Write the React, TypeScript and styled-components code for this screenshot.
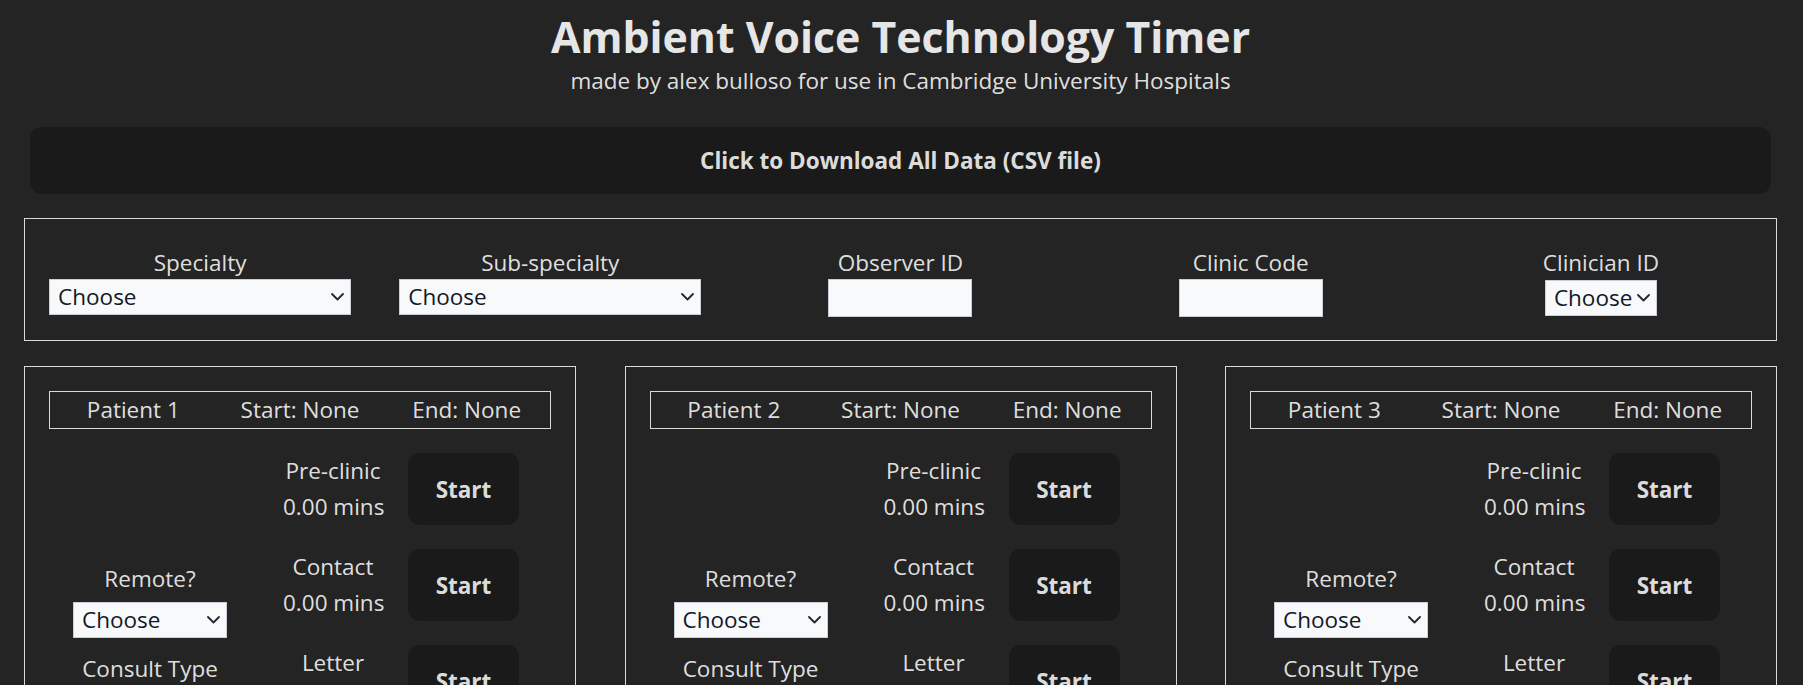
import React from 'react';
import styled, { createGlobalStyle } from 'styled-components';

const GlobalStyle = createGlobalStyle`
  html, body { margin: 0; padding: 0; background: #242424; }
  body {
    font-family: "Open Sans", "Noto Sans", sans-serif;
    color: rgba(255, 255, 255, 0.87);
    font-size: 22.5px;
    line-height: 36px;
    -webkit-font-smoothing: antialiased;
  }
  * { box-sizing: border-box; }
`;

const Page = styled.div`
  padding: 0 26px 0 24px;
`;

const Header = styled.header`
  text-align: center;
`;

const Title = styled.h1`
  margin: 13.6px 0 0;
  font-size: 42.8px;
  line-height: 46px;
  font-weight: 700;
  color: #e6e6e6;
`;

const Subtitle = styled.div`
  margin-top: 3.7px;
  line-height: 36px;
`;

const DownloadButton = styled.button`
  display: block;
  width: calc(100% - 12px);
  height: 67px;
  margin: 28px 6px 0;
  border: none;
  border-radius: 12px;
  background: #1a1a1a;
  color: rgba(255, 255, 255, 0.87);
  font-family: inherit;
  font-size: 22.5px;
  font-weight: 700;
  line-height: 36px;
  cursor: pointer;
`;

const InfoBox = styled.section`
  margin-top: 24px;
  border: 1px solid #d9d9d9;
  padding: 26px 0 23px;
  display: grid;
  grid-template-columns: repeat(5, 1fr);
  align-items: start;
  justify-items: center;
`;

const Field = styled.div`
  display: flex;
  flex-direction: column;
  align-items: center;
`;

const Label = styled.label<{ $gapBelow?: number; $gapAbove?: number }>`
  display: block;
  line-height: 36px;
  white-space: nowrap;
  margin-top: ${(p) => p.$gapAbove ?? 0}px;
  margin-bottom: ${(p) => p.$gapBelow ?? 0}px;
`;

const SelectWrap = styled.div<{ $w: number }>`
  position: relative;
  width: ${(p) => p.$w}px;
  height: 36px;
`;

const Select = styled.select`
  appearance: none;
  -webkit-appearance: none;
  width: 100%;
  height: 100%;
  margin: 0;
  border: 1px solid #c9ced6;
  border-radius: 0;
  background: #f8f9fa;
  color: #111827;
  font-family: inherit;
  font-size: 22.5px;
  line-height: 34px;
  padding: 0 8px;
  outline: none;
`;

const Chevron = styled.svg`
  position: absolute;
  right: 7px;
  top: 14px;
  width: 13px;
  height: 8px;
  pointer-events: none;
`;

const TextInput = styled.input`
  width: 144px;
  height: 38px;
  margin: 0;
  border: 1px solid #c9ced6;
  border-radius: 0;
  background: #f8f9fa;
  font-family: inherit;
  font-size: 22.5px;
  outline: none;
`;

const PatientGrid = styled.div`
  margin-top: 25px;
  display: grid;
  grid-template-columns: repeat(3, 1fr);
  gap: 48.5px;
`;

const PatientCard = styled.section`
  border: 1px solid #d9d9d9;
  padding: 24px 24px 40px;
`;

const PatientHeader = styled.div`
  border: 1px solid #d9d9d9;
  display: grid;
  grid-template-columns: repeat(3, 1fr);
  text-align: center;
  line-height: 36px;
  white-space: nowrap;
`;

const PatientBody = styled.div`
  margin-top: 24px;
  display: grid;
  grid-template-columns: 202px 1fr;
`;

const LeftCol = styled.div`
  display: flex;
  flex-direction: column;
  align-items: center;
  padding-top: 108px;
`;

const TimerList = styled.div`
  display: flex;
  flex-direction: column;
  gap: 24px;
`;

const TimerRow = styled.div`
  display: flex;
  justify-content: center;
  align-items: center;
  gap: 25px;
`;

const TimerText = styled.div`
  width: 100px;
  text-align: center;
  line-height: 36px;
  white-space: nowrap;
`;

const StartButton = styled.button`
  width: 111px;
  height: 72px;
  border: none;
  border-radius: 12px;
  background: #1a1a1a;
  color: rgba(255, 255, 255, 0.87);
  font-family: inherit;
  font-size: 22.5px;
  font-weight: 700;
  cursor: pointer;
  flex-shrink: 0;
`;

const ChooseSelect: React.FC<{ width: number }> = ({ width }) => (
  <SelectWrap $w={width}>
    <Select defaultValue="">
      <option value="">Choose</option>
    </Select>
    <Chevron viewBox="0 0 13 8">
      <path d="M1 1 L6.5 6.5 L12 1" fill="none" stroke="#1f2937" strokeWidth="1.8" strokeLinecap="round" strokeLinejoin="round" />
    </Chevron>
  </SelectWrap>
);

const timers = ['Pre-clinic', 'Contact', 'Letter'];

const Patient: React.FC<{ n: number }> = ({ n }) => (
  <PatientCard>
    <PatientHeader>
      <span>Patient {n}</span>
      <span>Start: None</span>
      <span>End: None</span>
    </PatientHeader>
    <PatientBody>
      <LeftCol>
        <Label $gapBelow={5}>Remote?</Label>
        <ChooseSelect width={154} />
        <Label $gapAbove={13} $gapBelow={5}>Consult Type</Label>
        <ChooseSelect width={154} />
      </LeftCol>
      <TimerList>
        {timers.map((t) => (
          <TimerRow key={t}>
            <TimerText>
              {t}
              <br />
              0.00 mins
            </TimerText>
            <StartButton>Start</StartButton>
          </TimerRow>
        ))}
      </TimerList>
    </PatientBody>
  </PatientCard>
);

export default function App() {
  return (
    <>
      <GlobalStyle />
      <Page>
        <Header>
          <Title>Ambient Voice Technology Timer</Title>
          <Subtitle>made by alex bulloso for use in Cambridge University Hospitals</Subtitle>
        </Header>
        <DownloadButton>Click to Download All Data (CSV file)</DownloadButton>
        <InfoBox>
          <Field>
            <Label $gapBelow={-2}>Specialty</Label>
            <ChooseSelect width={302} />
          </Field>
          <Field>
            <Label $gapBelow={-2}>Sub-specialty</Label>
            <ChooseSelect width={302} />
          </Field>
          <Field>
            <Label $gapBelow={-2}>Observer ID</Label>
            <TextInput type="text" />
          </Field>
          <Field>
            <Label $gapBelow={-2}>Clinic Code</Label>
            <TextInput type="text" />
          </Field>
          <Field>
            <Label $gapBelow={-1}>Clinician ID</Label>
            <ChooseSelect width={112} />
          </Field>
        </InfoBox>
        <PatientGrid>
          {[1, 2, 3].map((n) => (
            <Patient key={n} n={n} />
          ))}
        </PatientGrid>
      </Page>
    </>
  );
}
